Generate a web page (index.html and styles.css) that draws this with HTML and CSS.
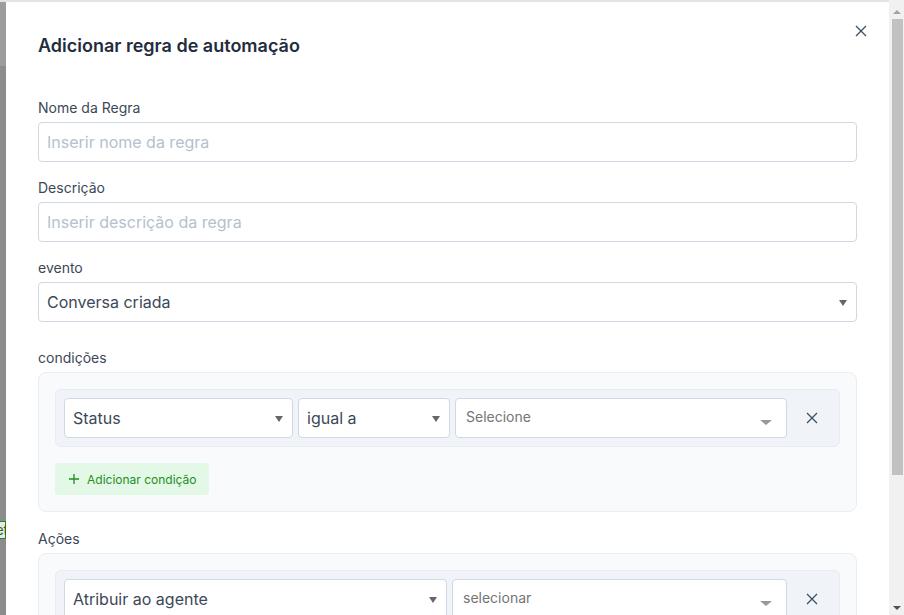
FILE: index.html
```html
<!DOCTYPE html>
<html lang="pt-BR">
<head>
    <meta charset="UTF-8">
    <meta name="viewport" content="width=device-width, initial-scale=1.0">
    <title>Adicionar regra de automação</title>
    <link rel="stylesheet" href="styles.css">
</head>
<body>
    <div class="screen">
        <div class="backdrop">
            <span class="peek">et</span>
        </div>

        <div class="modal">
            <button class="close-btn" aria-label="Fechar">
                <svg width="12" height="12" viewBox="0 0 12 12"><path d="M1 1L11 11M11 1L1 11" stroke="currentColor" stroke-width="1.3" fill="none"/></svg>
            </button>

            <h1 class="modal-title">Adicionar regra de automação</h1>

            <div class="field">
                <label>Nome da Regra</label>
                <input type="text" class="input" placeholder="Inserir nome da regra">
            </div>

            <div class="field">
                <label>Descrição</label>
                <input type="text" class="input" placeholder="Inserir descrição da regra">
            </div>

            <div class="field field-event">
                <label>evento</label>
                <div class="select">Conversa criada<span class="caret"></span></div>
            </div>

            <div class="field field-block">
                <label>condições</label>
                <div class="filter-box">
                    <div class="filter-row">
                        <div class="select select-attr">Status<span class="caret"></span></div>
                        <div class="select select-op">igual a<span class="caret"></span></div>
                        <div class="multiselect">Selecione<span class="caret caret-light"></span></div>
                        <button class="row-remove" aria-label="Remover">
                            <svg width="12" height="12" viewBox="0 0 12 12"><path d="M1 1L11 11M11 1L1 11" stroke="currentColor" stroke-width="1.3" fill="none"/></svg>
                        </button>
                    </div>
                    <button class="add-btn">
                        <svg width="12" height="12" viewBox="0 0 12 12"><path d="M6 1V11M1 6H11" stroke="currentColor" stroke-width="1.3" fill="none"/></svg>
                        Adicionar condição
                    </button>
                </div>
            </div>

            <div class="field field-block">
                <label>Ações</label>
                <div class="filter-box">
                    <div class="filter-row">
                        <div class="select select-action">Atribuir ao agente<span class="caret"></span></div>
                        <div class="multiselect">selecionar<span class="caret caret-light"></span></div>
                        <button class="row-remove" aria-label="Remover">
                            <svg width="12" height="12" viewBox="0 0 12 12"><path d="M1 1L11 11M11 1L1 11" stroke="currentColor" stroke-width="1.3" fill="none"/></svg>
                        </button>
                    </div>
                </div>
            </div>
        </div>

        <div class="scrollbar">
            <span class="sb-arrow sb-up"></span>
            <div class="sb-thumb"></div>
            <span class="sb-arrow sb-down"></span>
        </div>
    </div>
</body>
</html>
```

FILE: styles.css
```css
* {
    box-sizing: border-box;
}

body {
    margin: 0;
    padding: 0;
    font-family: Inter, "Noto Sans", sans-serif;
    color: #3c4858;
    background: #e6e6e6;
    overflow: hidden;
}

.screen {
    display: flex;
    height: 615px;
    border-top: 2px solid #e4e4e4;
}

.backdrop {
    width: 6px;
    flex: none;
    background: linear-gradient(#9c9c9c 0, #9c9c9c 64px, #8c8c8c 64px);
    padding-top: 519px;
    overflow: hidden;
}

.peek {
    display: block;
    width: 12px;
    height: 18px;
    border: 1px solid #1f8a1f;
    background: #e8e8e8;
    color: #1f6a1f;
    font-size: 13px;
    line-height: 16px;
    margin-left: -6px;
    padding-left: 1px;
}

.modal {
    position: relative;
    flex: 1;
    background: #fff;
    padding: 30px 32px 0;
    overflow: hidden;
}

.close-btn {
    position: absolute;
    top: 21px;
    right: 20px;
    width: 16px;
    height: 16px;
    padding: 2px;
    border: none;
    background: none;
    color: #3e4f61;
    display: flex;
}

.modal-title {
    margin: 0 0 39px;
    font-size: 18px;
    line-height: 27px;
    font-weight: 600;
    color: #1f2d3d;
}

.field {
    margin-bottom: 16px;
}

.field label {
    display: block;
    font-size: 14px;
    line-height: 20px;
    margin-bottom: 4px;
    color: #3c4858;
}

.field-event {
    margin-bottom: 26px;
}

.field-block {
    margin-bottom: 17px;
}

.input,
.select,
.multiselect {
    height: 40px;
    border: 1px solid #cfd9e3;
    border-radius: 4px;
    background: #fff;
    font-family: inherit;
}

.input {
    width: 100%;
    padding: 0 8px;
    font-size: 16px;
    color: #3c4858;
    outline: none;
}

.input::placeholder {
    color: #b4c1ce;
}

.select {
    position: relative;
    display: flex;
    align-items: center;
    padding: 0 8px;
    font-size: 16px;
    color: #3c4858;
}

.caret {
    position: absolute;
    right: 9px;
    top: 17px;
    width: 0;
    height: 0;
    border-left: 4px solid transparent;
    border-right: 4px solid transparent;
    border-top: 6px solid #666;
}

.caret-light {
    right: 14px;
    top: 21px;
    border-left-width: 6px;
    border-right-width: 6px;
    border-top: 5px solid #999;
}

.filter-box {
    background: #f8fafc;
    border: 1px solid #e8eef4;
    border-radius: 8px;
    padding: 16px;
}

.filter-row {
    display: flex;
    align-items: center;
    gap: 5px;
    background: #f0f4f8;
    border: 1px solid #e6ecf2;
    border-radius: 6px;
    padding: 8px;
}

.select-attr {
    flex: 0 0 229px;
}

.select-op {
    flex: 0 0 152px;
}

.select-action {
    flex: 0 0 383px;
}

.multiselect {
    position: relative;
    flex: 1;
    padding: 9px 10px 0;
    font-size: 14px;
    line-height: 18px;
    color: #757575;
}

.row-remove {
    flex: none;
    width: 38px;
    height: 38px;
    margin-left: 1px;
    border: none;
    background: none;
    color: #3e4f61;
    display: flex;
    align-items: center;
    justify-content: center;
}

.add-btn {
    display: flex;
    align-items: center;
    gap: 7px;
    margin-top: 16px;
    height: 32px;
    padding: 0 12px 0 13px;
    border: none;
    border-radius: 4px;
    background: #e3f8e6;
    color: #1f8f1f;
    font-family: inherit;
    font-size: 12px;
}

.scrollbar {
    width: 15px;
    flex: none;
    margin-top: -2px;
    background: #f1f1f1;
    display: flex;
    flex-direction: column;
    align-items: center;
}

.sb-arrow {
    width: 0;
    height: 0;
    border-left: 4px solid transparent;
    border-right: 4px solid transparent;
}

.sb-up {
    margin-top: 10px;
    border-bottom: 4px solid #a3a3a3;
}

.sb-thumb {
    width: 11px;
    height: 456px;
    margin-top: 5px;
    margin-left: 2px;
    background: #c1c1c1;
}

.sb-down {
    margin-top: auto;
    margin-bottom: 5px;
    border-top: 4px solid #505050;
}
```
